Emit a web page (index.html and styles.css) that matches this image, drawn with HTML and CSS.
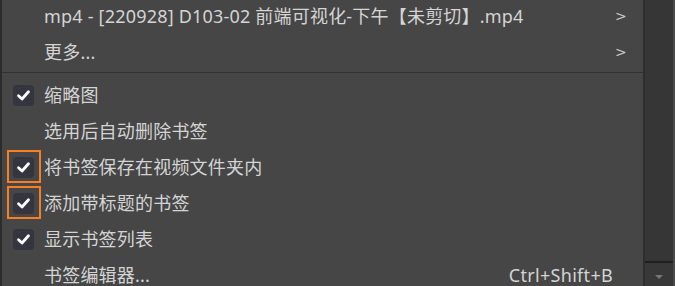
FILE: index.html
```html
<!DOCTYPE html>
<html lang="zh-CN">
<head>
<meta charset="utf-8">
<title>菜单</title>
<link rel="stylesheet" href="styles.css">
</head>
<body>
<div class="screen">
  <div class="menu">
    <div class="item">
      <span class="check"></span>
      <span class="label">mp4 - [220928] D103-02 前端可视化-下午【未剪切】.mp4</span>
      <span class="arrow">&gt;</span>
    </div>
    <div class="item">
      <span class="check"></span>
      <span class="label">更多...</span>
      <span class="arrow">&gt;</span>
    </div>
    <div class="sep"></div>
    <div class="item">
      <span class="check"><span class="box"><svg viewBox="0 0 21 21" width="21" height="21"><path d="M5.5 10.8 L9 14 L15.5 6.8" fill="none" stroke="#fff" stroke-width="2.8" stroke-linecap="round" stroke-linejoin="round"/></svg></span></span>
      <span class="label">缩略图</span>
    </div>
    <div class="item">
      <span class="check"></span>
      <span class="label">选用后自动删除书签</span>
    </div>
    <div class="item">
      <span class="check"><span class="box"><svg viewBox="0 0 21 21" width="21" height="21"><path d="M5.5 10.8 L9 14 L15.5 6.8" fill="none" stroke="#fff" stroke-width="2.8" stroke-linecap="round" stroke-linejoin="round"/></svg></span><span class="mark"></span></span>
      <span class="label">将书签保存在视频文件夹内</span>
    </div>
    <div class="item">
      <span class="check"><span class="box"><svg viewBox="0 0 21 21" width="21" height="21"><path d="M5.5 10.8 L9 14 L15.5 6.8" fill="none" stroke="#fff" stroke-width="2.8" stroke-linecap="round" stroke-linejoin="round"/></svg></span><span class="mark"></span></span>
      <span class="label">添加带标题的书签</span>
    </div>
    <div class="item">
      <span class="check"><span class="box"><svg viewBox="0 0 21 21" width="21" height="21"><path d="M5.5 10.8 L9 14 L15.5 6.8" fill="none" stroke="#fff" stroke-width="2.8" stroke-linecap="round" stroke-linejoin="round"/></svg></span></span>
      <span class="label">显示书签列表</span>
    </div>
    <div class="item">
      <span class="check"></span>
      <span class="label">书签编辑器...</span>
      <span class="shortcut">Ctrl+Shift+B</span>
    </div>
  </div>
  <div class="side">
    <div class="side-top"></div>
    <div class="side-bottom"><span class="tri"></span></div>
  </div>
</div>
</body>
</html>
```

FILE: styles.css
```css
html, body {
  margin: 0;
  padding: 0;
  background: #363636;
  overflow: hidden;
}
.screen {
  display: flex;
  width: 675px;
  height: 286px;
  overflow: hidden;
}
.menu {
  width: 641px;
  border-left: 2px solid #2c2c2c;
  border-right: 2px solid #2e2e2e;
  background: #464646;
  margin-top: -2px;
  height: 292px;
  font-family: "Noto Sans", "Noto Sans CJK SC", sans-serif;
  font-size: 18px;
  line-height: 24px;
  color: #d4d4d4;
}
.item {
  display: flex;
  align-items: center;
  height: 36px;
}
.check {
  position: relative;
  width: 42px;
  height: 36px;
  display: flex;
  align-items: center;
  flex: none;
}
.box {
  margin-left: 11px;
  width: 21px;
  height: 21px;
  border-radius: 4px;
  background: #353540;
  display: block;
}
.box svg { display: block; }
.mark {
  position: absolute;
  left: 5px;
  top: 1px;
  width: 30px;
  height: 29px;
  border: 2px solid #f57f22;
}
.label {
  flex: 1;
  white-space: nowrap;
  overflow: hidden;
  letter-spacing: 0.2px;
}
.arrow {
  width: 28px;
  color: #c8c8c8;
  font-family: "DejaVu Sans", sans-serif;
  font-size: 14px;
}
.shortcut {
  margin-right: 30px;
  letter-spacing: 0.3px;
}
.sep {
  height: 5px;
  box-sizing: border-box;
  border-top: 1px solid #30303a;
  margin-top: 2px;
}
.side {
  width: 28px;
  display: flex;
  flex-direction: column;
  border-right: 2px solid #4a4a4a;
}
.side-top {
  height: 261px;
  background: #363636;
}
.side-bottom {
  flex: 1;
  border-top: 2px solid #1e1e1e;
  background: #383838;
  display: flex;
  justify-content: center;
  align-items: center;
  padding-top: 4px;
}
.tri {
  width: 0;
  height: 0;
  border-left: 4px solid transparent;
  border-right: 4px solid transparent;
  border-top: 4px solid #777;
}
```
